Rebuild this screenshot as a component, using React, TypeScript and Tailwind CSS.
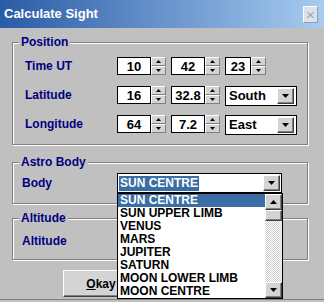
import React from "react";

const font = "font-['Liberation_Sans',Arial,sans-serif]";

function UpDown() {
  return (
    <div className="flex h-[18px] w-[15px] flex-col">
      {[0, 1].map((i) => (
        <div
          key={i}
          className="flex h-[9px] w-[15px] items-center justify-center border border-t-white border-l-white border-r-[#808080] border-b-[#808080] bg-[#d4d4d4]"
        >
          <svg width="5" height="3" viewBox="0 0 5 3">
            {i === 0 ? (
              <polygon points="2.5,0 5,3 0,3" fill="#000" />
            ) : (
              <polygon points="0,0 5,0 2.5,3" fill="#000" />
            )}
          </svg>
        </div>
      ))}
    </div>
  );
}

function Spin({ value, w = "w-[34px]" }: { value: string; w?: string }) {
  return (
    <div className="flex">
      <div
        className={`${w} flex h-[18px] items-center justify-center border border-black bg-white text-[13px] font-bold leading-none text-black`}
      >
        {value}
      </div>
      <UpDown />
    </div>
  );
}

function DropBtn() {
  return (
    <div className="flex h-[16px] w-[17px] items-center justify-center border border-t-white border-l-white border-r-[#404040] border-b-[#404040] bg-[#d4d4d4] shadow-[inset_-1px_-1px_0_#808080]">
      <svg width="7" height="4" viewBox="0 0 7 4">
        <polygon points="0,0 7,0 3.5,4" fill="#000" />
      </svg>
    </div>
  );
}

function Combo({ value }: { value: string }) {
  return (
    <div className="flex h-[20px] w-[72px] items-center justify-between border border-black bg-white pl-[3px] pr-[2px] text-[13px] font-bold text-black">
      <span>{value}</span>
      <DropBtn />
    </div>
  );
}

function Group({
  title,
  cls,
  children,
}: {
  title: string;
  cls: string;
  children?: React.ReactNode;
}) {
  return (
    <div
      className={`relative ml-[12px] w-[296px] border border-[#808080] shadow-[inset_1px_1px_0_#fff,1px_1px_0_#fff] ${cls}`}
    >
      <div className="absolute left-[6px] top-[-8px] bg-[#c0c0c0] px-[2px] text-[12px] font-bold leading-[14px] text-[#000080]">
        {title}
      </div>
      {children}
    </div>
  );
}

const items = [
  "SUN CENTRE",
  "SUN UPPER LIMB",
  "VENUS",
  "MARS",
  "JUPITER",
  "SATURN",
  "MOON LOWER LIMB",
  "MOON CENTRE",
];

export default function App() {
  return (
    <div
      className={`${font} relative flex h-[302px] w-[324px] flex-col overflow-hidden bg-[#c0c0c0]`}
    >
      {/* title bar */}
      <div className="flex h-[28px] shrink-0 items-center justify-between bg-gradient-to-r from-[#2a5ba6] to-[#a8ccf0] pl-[4px] pr-[6px]">
        <span className="text-[13px] font-bold text-white">Calculate Sight</span>
        <div className="flex h-[17px] w-[15px] items-center justify-center border border-t-white border-l-white border-r-[#9aa0aa] border-b-[#9aa0aa] bg-[#dde2ea] text-[15px] leading-none text-[#a0a4ac]">
          ×
        </div>
      </div>

      {/* Position */}
      <Group title="Position" cls="mt-[14px] h-[103px]">
        <div className="flex flex-col gap-[11px] pl-[12px] pt-[14px]">
          <div className="flex h-[18px] items-center">
            <span className="w-[92px] text-[12px] font-bold text-[#000080]">Time UT</span>
            <div className="flex gap-[5px]">
              <Spin value="10" />
              <Spin value="42" />
              <Spin value="23" w="w-[26px]" />
            </div>
          </div>
          <div className="flex h-[20px] items-start">
            <span className="w-[92px] text-[12px] font-bold leading-[18px] text-[#000080]">
              Latitude
            </span>
            <div className="flex gap-[5px]">
              <Spin value="16" />
              <Spin value="32.8" />
              <Combo value="South" />
            </div>
          </div>
          <div className="-mt-[2px] flex h-[20px] items-start">
            <span className="w-[92px] text-[12px] font-bold leading-[18px] text-[#000080]">
              Longitude
            </span>
            <div className="flex gap-[5px]">
              <Spin value="64" />
              <Spin value="7.2" />
              <Combo value="East" />
            </div>
          </div>
        </div>
      </Group>

      {/* Astro Body */}
      <Group title="Astro Body" cls="mt-[17px] h-[42px]">
        <div className="flex items-center pl-[9px] pt-[10px]">
          <span className="w-[95px] text-[12px] font-bold text-[#000080]">Body</span>
          <div className="flex h-[20px] w-[165px] items-center justify-between border border-black bg-white pl-[1px] pr-[1px]">
            <span className="bg-[#3a6ea5] px-[1px] text-[12px] font-bold leading-[15px] text-white">
              SUN CENTRE
            </span>
            <DropBtn />
          </div>
        </div>
      </Group>

      {/* Altitude */}
      <Group title="Altitude" cls="mt-[14px] h-[42px]">
        <div className="pl-[9px] pt-[13px] text-[12px] font-bold text-[#000080]">Altitude</div>
      </Group>

      {/* Okay button */}
      <div className="ml-[63px] mt-[10px] flex h-[27px] w-[76px] items-center justify-center border border-t-white border-l-white border-r-[#404040] border-b-[#404040] bg-[#d4d4d4] shadow-[inset_-1px_-1px_0_#808080] text-[12px] font-bold text-black">
        <span>
          <span className="underline">O</span>kay
        </span>
      </div>

      {/* window bottom edge */}
      <div className="absolute bottom-0 left-0 h-[3px] w-full border-t border-[#808080] bg-[#c0c0c0]" />

      {/* dropdown list (overlay) */}
      <div className="absolute left-[117px] top-[193px] flex h-[106px] w-[166px] border border-black bg-white">
        <div className="flex flex-1 flex-col">
          {items.map((t, i) => (
            <div
              key={t}
              className={`h-[13px] pl-[2px] text-[12px] font-bold leading-[13px] ${
                i === 0 ? "bg-[#3a6ea5] text-white" : "text-black"
              }`}
            >
              {t}
            </div>
          ))}
        </div>
        <div className="flex w-[17px] flex-col">
          <div className="flex h-[16px] items-center justify-center border border-t-white border-l-white border-r-[#404040] border-b-[#404040] bg-[#d4d4d4] shadow-[inset_-1px_-1px_0_#808080]">
            <svg width="7" height="4" viewBox="0 0 7 4">
              <polygon points="3.5,0 7,4 0,4" fill="#000" />
            </svg>
          </div>
          <div className="h-[11px] border border-t-white border-l-white border-r-[#404040] border-b-[#404040] bg-[#d4d4d4] shadow-[inset_-1px_-1px_0_#808080]" />
          <div className="flex-1 bg-[repeating-conic-gradient(#ffffff_0_25%,#d0d0d0_0_50%)] bg-[length:2px_2px]" />
          <div className="flex h-[16px] items-center justify-center border border-t-white border-l-white border-r-[#404040] border-b-[#404040] bg-[#d4d4d4] shadow-[inset_-1px_-1px_0_#808080]">
            <svg width="7" height="4" viewBox="0 0 7 4">
              <polygon points="0,0 7,0 3.5,4" fill="#000" />
            </svg>
          </div>
        </div>
      </div>
    </div>
  );
}
